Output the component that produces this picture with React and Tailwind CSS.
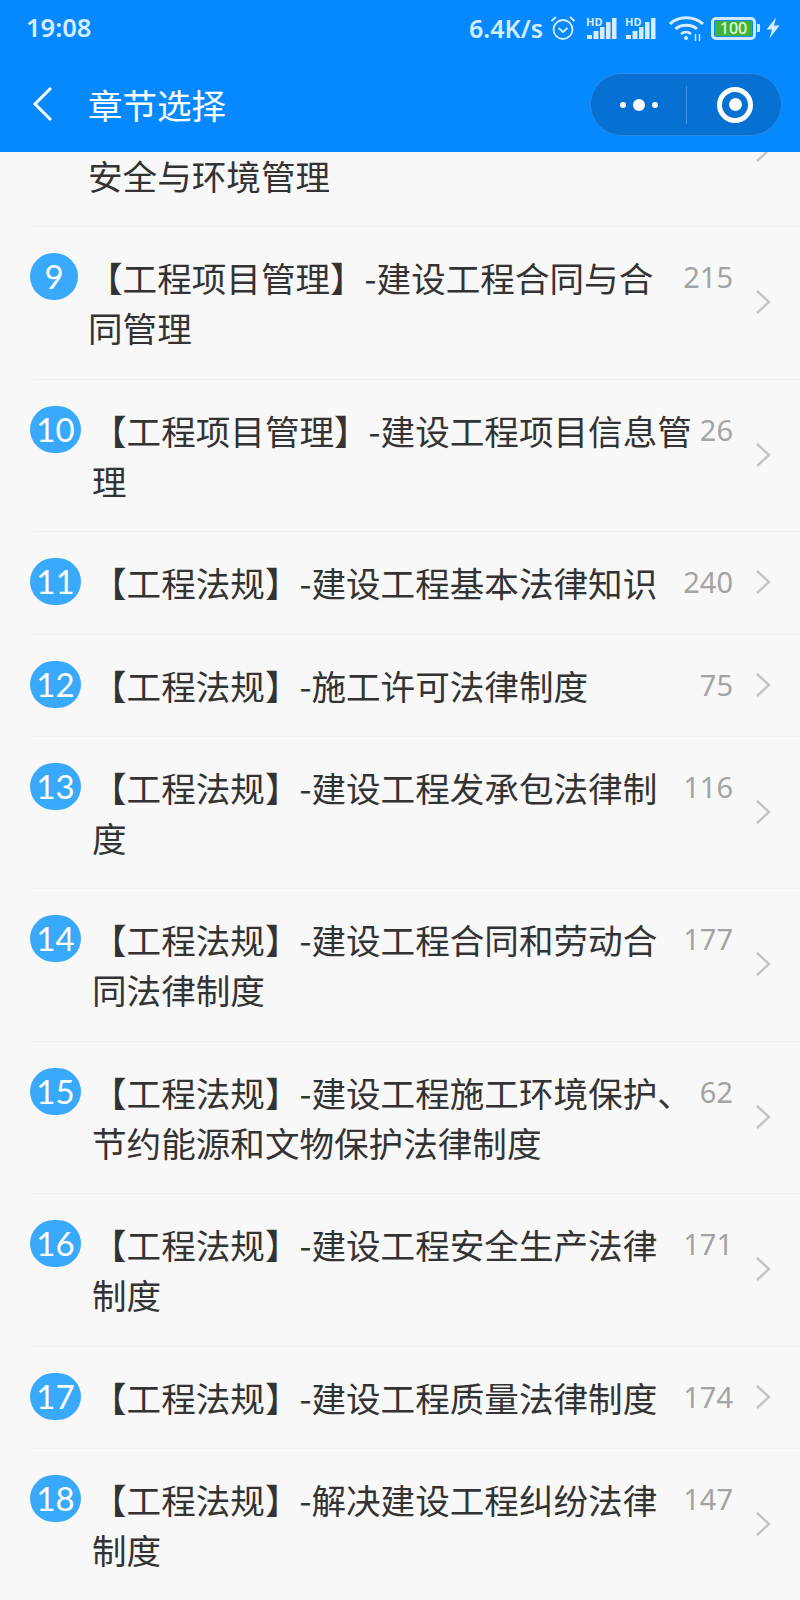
const rows = [
  { n: 8, t: "【工程项目管理】-建设工程职业健康安全与环境管理", c: 196 },
  { n: 9, t: "【工程项目管理】-建设工程合同与合同管理", c: 215 },
  { n: 10, t: "【工程项目管理】-建设工程项目信息管理", c: 26 },
  { n: 11, t: "【工程法规】-建设工程基本法律知识", c: 240 },
  { n: 12, t: "【工程法规】-施工许可法律制度", c: 75 },
  { n: 13, t: "【工程法规】-建设工程发承包法律制度", c: 116 },
  { n: 14, t: "【工程法规】-建设工程合同和劳动合同法律制度", c: 177 },
  { n: 15, t: "【工程法规】-建设工程施工环境保护、节约能源和文物保护法律制度", c: 62 },
  { n: 16, t: "【工程法规】-建设工程安全生产法律制度", c: 171 },
  { n: 17, t: "【工程法规】-建设工程质量法律制度", c: 174 },
  { n: 18, t: "【工程法规】-解决建设工程纠纷法律制度", c: 147 },
];

function Signal() {
  return (
    <div className="relative w-[31px] h-[24px] mt-[2px]">
      <span className="absolute left-0 top-0 text-[11px] leading-[9px] font-bold text-[#d8ecff] font-['Noto_Sans',sans-serif]">HD</span>
      <svg className="absolute inset-0" width="31" height="24" viewBox="0 0 31 24" fill="#d8ecff">
        <rect x="1" y="18" width="5" height="4" />
        <rect x="7.5" y="14" width="5" height="8" />
        <rect x="14" y="10" width="4.5" height="12" />
        <rect x="20" y="5" width="4.5" height="17" />
        <rect x="26" y="1" width="4.5" height="21" />
      </svg>
    </div>
  );
}

function Row({ n, t, c }) {
  const two = n >= 10;
  return (
    <div className="flex items-start ml-[33px] pt-[25px] pb-[26.4px] border-b border-[#f1f1f1]">
      <div className={`-ml-[3px] shrink-0 mt-[1px] h-[47px] rounded-full bg-[#38a9fb] text-white flex items-center justify-center text-[33px] leading-none font-['Lato',sans-serif] ${two ? "w-[51px] mr-[11px]" : "w-[48px] mr-[10px]"}`}>
        {n}
      </div>
      <div className="flex-1 min-w-0 text-[34.6px] leading-[50px] text-[#333333] font-['Noto_Sans_CJK_SC',sans-serif]">{t}</div>
      <div className="shrink-0 text-right self-start text-[29px] leading-[50px] text-[#a3a3a3] font-['Noto_Sans',sans-serif]">{c}</div>
      <div className="shrink-0 w-[67px] self-stretch flex items-center justify-start pl-[22px]">
        <svg width="16" height="26" viewBox="0 0 16 26" fill="none" stroke="#c4c4c4" strokeWidth="2.4">
          <path d="M2 2 L14 13 L2 24" />
        </svg>
      </div>
    </div>
  );
}

export default function App() {
  return (
    <div className="w-[800px] h-[1600px] bg-[#f8f8f8] overflow-hidden flex flex-col font-['Noto_Sans_CJK_SC',sans-serif]">
      <header className="relative z-10 h-[152px] shrink-0 bg-[#0688ff] flex flex-col">
        <div className="h-[56px] flex items-center justify-between pl-[26px] pr-[20px] font-['Noto_Sans',sans-serif] text-[#d8ecff]">
          <span className="text-[25.5px] font-semibold leading-none">19:08</span>
          <div className="flex items-center">
            <span className="text-[25px] font-semibold leading-none mr-[7px]">6.4K/s</span>
            <svg width="26" height="26" viewBox="0 0 26 26" fill="none" stroke="#d8ecff" strokeWidth="1.8" className="mr-[10px]">
              <circle cx="13" cy="14.5" r="9.5" />
              <path d="M8.5 13 L13 17 L17.5 13" />
              <path d="M1.5 6 L6 2 M20 2 L24.5 6" />
            </svg>
            <Signal />
            <div className="w-[8px]" />
            <Signal />
            <svg width="35" height="26" viewBox="0 0 35 26" fill="none" stroke="#d8ecff" strokeWidth="3" className="ml-[13px]">
              <path d="M1 9 C9 0.5 25 0.5 34 9" />
              <path d="M6.5 14 C12 9 22.5 9 28 14" />
              <path d="M12 19 C15 16.5 19 16.5 22 19" strokeWidth="2.6" />
              <circle cx="17" cy="23" r="2" fill="#d8ecff" stroke="none" />
              <path d="M26.5 19 V26 M30.5 19 V26" strokeWidth="1.4" />
            </svg>
            <div className="ml-[7px] w-[45px] h-[23px] rounded-[5px] border-[3px] border-[#cfe8ff] p-[1px] flex">
              <div className="flex-1 bg-[#3fb43a] rounded-[1px] flex items-center justify-center text-[16px] leading-none text-[#e6f5d8] font-medium">100</div>
            </div>
            <div className="w-[3px] h-[8px] bg-[#d8ecff] ml-[1px] rounded-r-[1px]" />
            <svg width="14" height="22" viewBox="0 0 14 22" fill="#d8ecff" className="ml-[6px]">
              <path d="M10 0.5 L0.5 12.5 H6 L3.5 21.5 L13.5 8.5 H8 Z" />
            </svg>
          </div>
        </div>
        <div className="flex-1 flex items-start">
          <svg width="24" height="36" viewBox="0 0 24 36" fill="none" stroke="#ffffff" strokeWidth="3" className="ml-[32px] mt-[30px]">
            <path d="M19 2 L3 18 L19 34" />
          </svg>
          <span className="ml-[32px] mt-[26px] text-[34.5px] leading-[44px] text-white">章节选择</span>
          <div className="ml-auto mr-[18px] mt-[17px] w-[192px] h-[63px] rounded-full bg-[#0671d2] border border-[#2a8ce6] flex items-center">
            <div className="w-[95px] flex items-center justify-center gap-[7px]">
              <span className="w-[6px] h-[6px] rounded-full bg-white" />
              <span className="w-[12px] h-[12px] rounded-full bg-white" />
              <span className="w-[6px] h-[6px] rounded-full bg-white" />
            </div>
            <div className="w-px h-[38px] bg-[#3d95e6]" />
            <div className="flex-1 flex items-center justify-center pl-[2px]">
              <div className="w-[36px] h-[36px] rounded-full border-[5px] border-white flex items-center justify-center">
                <span className="w-[13px] h-[13px] rounded-full bg-white" />
              </div>
            </div>
          </div>
        </div>
      </header>
      <main className="flex-1 min-h-0 overflow-hidden">
        <div className="-mt-[77px]">
          {rows.map((r) => <Row key={r.n} {...r} />)}
        </div>
      </main>
    </div>
  );
}
